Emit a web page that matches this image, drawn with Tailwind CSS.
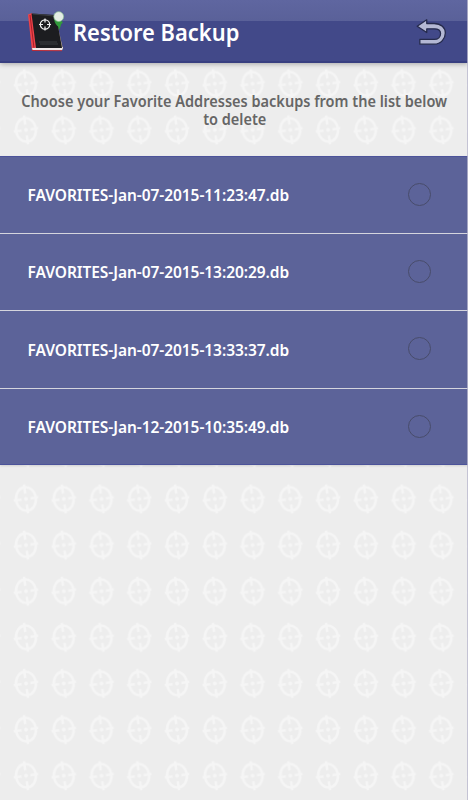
<!DOCTYPE html>
<html lang="en">
<head>
<meta charset="utf-8">
<title>Restore Backup</title>
<script src="https://cdn.jsdelivr.net/npm/@tailwindcss/browser@4"></script>
</head>
<body class="bg-[#ededed] font-['Noto_Sans',sans-serif]">
<div class="relative isolate flex h-[800px] w-[468px] flex-col overflow-hidden bg-[#ededed]">
  <svg class="absolute inset-0 -z-10 h-full w-full" aria-hidden="true">
    <defs>
      <pattern id="sights" x="7.1" y="60.7" width="37.76" height="46.13" patternUnits="userSpaceOnUse">
        <g transform="translate(18.9 23.1) rotate(-8)" fill="none" stroke="#f5f5f5">
          <ellipse rx="9.9" ry="11.8" stroke-width="2.5"/>
          <path d="M0-14.5V-5.5M0 5.5V14.5M-12.3 0H-4.5M4.5 0H12.3" stroke-width="2.5"/>
          <circle r="1.9" fill="#f5f5f5" stroke="none"/>
        </g>
      </pattern>
    </defs>
    <rect width="468" height="800" fill="url(#sights)"/>
  </svg>
  <header class="flex h-[63px] shrink-0 items-center border-b-2 border-[#383f80] bg-linear-to-b from-[#5f66a0] from-0% via-[#5a6199] via-34% to-[#424989] to-34% pl-[27px] pr-[20px] shadow-[0_1px_5px_rgba(0,0,0,0.3)]">
    <svg class="mt-[2px] h-[42px] w-[39px] shrink-0" viewBox="0 0 39 42">
      <path d="M29 13l6-3-2 7-3 5z" fill="#329b3c"/>
      <path d="M1 3.5L5 2l7 33-7 5z" fill="#ed4349"/>
      <path d="M3 4l4 33" stroke="#a91e2a" fill="none"/>
      <path d="M30 12l6 26-2 1-7-25z" fill="#b8a68c"/>
      <path d="M5 37l31-1-1 3.5L6 40z" fill="#eee8e8"/>
      <path d="M5 39.5l30 .2" stroke="#b92936" fill="none"/>
      <path d="M4.5 2.5L29 4l6 33L9 37z" fill="#1c1d20"/>
      <path d="M6 3l21 2M12 31l18 0M13 33h18" stroke="#44464a" stroke-width=".8" fill="none"/>
      <g fill="none" stroke="#f2f2f2" stroke-width="1.2"><circle cx="18" cy="13.5" r="4.7"/><path d="M18 7.5v4M18 15.5v4M12 13.5h4M20 13.5h4"/></g>
      <path d="M27 8q1 6 5 8l4-5" fill="#329b3c"/>
      <circle cx="31.7" cy="5.6" r="4.9" fill="#e4ede4" stroke="#8fc496" stroke-width=".7"/>
    </svg>
    <h1 class="ml-[7px] mt-[2px] flex-1 origin-left scale-x-[0.912] whitespace-nowrap text-[24px] leading-8 font-semibold text-white">Restore Backup</h1>
    <svg class="mt-[3px] h-[32px] w-[34px] shrink-0" viewBox="0 0 32 30">
      <path d="M3 9.5L12 3.5V7H19C25.5 7 29.5 11 29.5 16S25.5 26.5 19 26.5H5.5V22H19C22.8 22 25 19.6 25 16.5S22.8 12 19 12H12V15.5Z" fill="#b4b8d4" stroke="#252a4c" stroke-width="1.2" stroke-linejoin="round"/>
    </svg>
  </header>
  <div class="flex h-[93px] shrink-0 flex-col items-center whitespace-nowrap pt-[29px] pl-[1px] text-[15.5px] leading-[18px] font-semibold text-[#666]">
    <p class="scale-x-[0.937]">Choose your Favorite Addresses backups from the list below</p>
    <p class="scale-x-[0.937]">to delete</p>
  </div>
  <ul class="h-[309px] shrink-0 divide-y divide-[#d5d5de] border-y border-[#4c539a] bg-[#5c6399] text-[15.5px] font-semibold text-white shadow-[0_1px_2px_rgba(0,0,0,0.12)]">
    <li class="flex h-[77px] items-center justify-between pl-[27.5px] pr-[37px]"><span class="pt-[2px] tracking-[-0.06px]">FAVORITES-Jan-07-2015-11:23:47.db</span><span class="mb-[2px] size-[23px] rounded-full border border-[#484c6b]"></span></li>
    <li class="flex h-[77px] items-center justify-between pl-[27.5px] pr-[37px]"><span class="pt-[2px] tracking-[-0.06px]">FAVORITES-Jan-07-2015-13:20:29.db</span><span class="mb-[2px] size-[23px] rounded-full border border-[#484c6b]"></span></li>
    <li class="flex h-[78px] items-center justify-between pl-[27.5px] pr-[37px]"><span class="pt-[2px] tracking-[-0.06px]">FAVORITES-Jan-07-2015-13:33:37.db</span><span class="mb-[2px] size-[23px] rounded-full border border-[#484c6b]"></span></li>
    <li class="flex h-[76px] items-center justify-between pl-[27.5px] pr-[37px]"><span class="pt-[2px] tracking-[-0.06px]">FAVORITES-Jan-12-2015-10:35:49.db</span><span class="mb-[2px] size-[23px] rounded-full border border-[#484c6b]"></span></li>
  </ul>
  <div class="absolute inset-y-0 right-0 w-px bg-[#b9b8cd]/80"></div>
</div>
</body>
</html>
